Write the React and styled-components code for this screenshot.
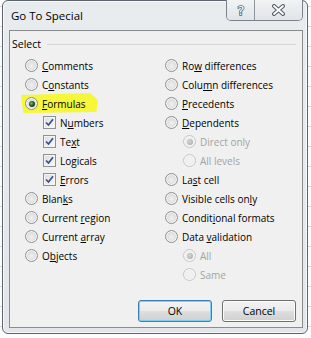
import React from 'react'
import styled, { createGlobalStyle, css } from 'styled-components'

const GlobalStyle = createGlobalStyle`
  html, body { margin:0; padding:0; }
  body {
    width:311px;
    height:338px;
    overflow:hidden;
    background-color:#fdfdfd;
    background-image:linear-gradient(#d9d9d9 1px, transparent 1px);
    background-size:100% 20px;
    background-position:0 6px;
    font-family:"Open Sans", "Noto Sans", sans-serif;
  }
`

const left = [
  { label: 'Comments', key: 'C', kind: 'radio' },
  { label: 'Constants', key: 'o', at: 1, kind: 'radio' },
  { label: 'Formulas', key: 'F', kind: 'radio', checked: true, mark: true },
  { label: 'Numbers', key: 'u', at: 1, kind: 'check', indent: true },
  { label: 'Text', key: 'x', at: 2, kind: 'check', indent: true },
  { label: 'Logicals', key: 'g', at: 2, kind: 'check', indent: true },
  { label: 'Errors', key: 'E', kind: 'check', indent: true },
  { label: 'Blanks', key: 'k', at: 4, kind: 'radio' },
  { label: 'Current region', key: 'r', at: 8, kind: 'radio' },
  { label: 'Current array', key: 'a', at: 8, kind: 'radio' },
  { label: 'Objects', key: 'b', at: 1, kind: 'radio' },
]

const right = [
  { label: 'Row differences', key: 'w', at: 2, kind: 'radio' },
  { label: 'Column differences', key: 'm', at: 4, kind: 'radio' },
  { label: 'Precedents', key: 'P', kind: 'radio' },
  { label: 'Dependents', key: 'D', kind: 'radio' },
  { label: 'Direct only', kind: 'radio', indent: true, disabled: true, checked: true },
  { label: 'All levels', kind: 'radio', indent: true, disabled: true },
  { label: 'Last cell', key: 's', at: 2, kind: 'radio' },
  { label: 'Visible cells only', key: 'y', at: 16, kind: 'radio' },
  { label: 'Conditional formats', key: 't', at: 6, kind: 'radio' },
  { label: 'Data validation', key: 'v', at: 5, kind: 'radio' },
  { label: 'All', kind: 'radio', indent: true, disabled: true, checked: true },
  { label: 'Same', kind: 'radio', indent: true, disabled: true },
]

function Label({ text, at = 0, hasKey }) {
  if (!hasKey) return <span>{text}</span>
  return (
    <span>
      {text.slice(0, at)}
      <u>{text[at]}</u>
      {text.slice(at + 1)}
    </span>
  )
}

function Option({ o }) {
  return (
    <Row $indent={o.indent} $mark={o.mark} $disabled={o.disabled}>
      {o.kind === 'radio' ? (
        <Radio $checked={o.checked} $disabled={o.disabled} />
      ) : (
        <Check>
          <svg width="9" height="9" viewBox="0 0 9 9">
            <path d="M1 4.5 L3.5 7 L8 1.2" fill="none" stroke="#34508f" strokeWidth="1.7" />
          </svg>
        </Check>
      )}
      <Label text={o.label} at={o.at} hasKey={!!o.key} />
    </Row>
  )
}

function App() {
  return (
    <>
      <GlobalStyle />
      <Window>
        <TitleBar>
          <Title>Go To Special</Title>
          <Caption>
            <CapButton $w={27}>
              <svg width="12" height="14" viewBox="0 0 12 14">
                <text x="6" y="12" textAnchor="middle" fontSize="13" fontFamily="DejaVu Sans, sans-serif"
                  fill="#fff" stroke="#5b626b" strokeWidth="1.6" paintOrder="stroke">?</text>
              </svg>
            </CapButton>
            <CapButton $w={47}>
              <svg width="15" height="12" viewBox="0 0 15 12">
                <path d="M3 2 L12 10 M12 2 L3 10" stroke="#59606a" strokeWidth="4" strokeLinecap="round" />
                <path d="M3 2 L12 10 M12 2 L3 10" stroke="#fff" strokeWidth="1.8" strokeLinecap="round" />
              </svg>
            </CapButton>
          </Caption>
        </TitleBar>
        <Client>
          <GroupHead>
            <span>Select</span>
            <Rule />
          </GroupHead>
          <Columns>
            <Col>{left.map(o => <Option key={o.label} o={o} />)}</Col>
            <Col>{right.map(o => <Option key={o.label} o={o} />)}</Col>
          </Columns>
          <Buttons>
            <Button $default>OK</Button>
            <Button>Cancel</Button>
          </Buttons>
        </Client>
      </Window>
    </>
  )
}

export default App

const Window = styled.div`
  margin-left:2px;
  width:306px;
  height:334px;
  box-sizing:border-box;
  border:1px solid #5d646d;
  border-radius:6px;
  background:linear-gradient(#e9ecef, #e2e6ea);
  box-shadow:inset 0 0 0 1px #f8f9fa;
  display:flex;
  flex-direction:column;
`
const TitleBar = styled.div`
  height:29px;
  display:flex;
  align-items:flex-start;
  padding:0 4px 0 8px;
`
const Title = styled.div`
  height:29px;
  line-height:29px;
  font-size:11.5px;
  color:#000;
`
const Caption = styled.div`
  margin-left:auto;
  margin-top:-1px;
  display:flex;
  border:1px solid #7c828a;
  border-top:none;
  border-radius:0 0 5px 5px;
  overflow:hidden;
  box-shadow:inset 0 0 0 1px #f5f7f9;
`
const CapButton = styled.div`
  width:${p => p.$w}px;
  height:20px;
  display:flex;
  align-items:center;
  justify-content:center;
  background:linear-gradient(#f1f3f5, #e1e5e9);
  & + & { border-left:1px solid #8e949b; }
`
const Client = styled.div`
  margin-left:6px;
  width:294px;
  height:298px;
  box-sizing:border-box;
  border:1px solid #8a8c8f;
  background:#f0f0f0;
  display:flex;
  flex-direction:column;
`
const GroupHead = styled.div`
  margin-top:6px;
  height:14px;
  display:flex;
  align-items:center;
  gap:6px;
  padding:0 6px 0 2px;
  font-size:10.5px;
  color:#000;
`
const Rule = styled.div`
  flex:1;
  height:1px;
  background:#d6d6d6;
`
const Columns = styled.div`
  margin-top:5px;
  display:grid;
  grid-template-columns:140px 1fr;
  padding-left:15px;
`
const Col = styled.div`
  display:flex;
  flex-direction:column;
`
const Row = styled.div`
  position:relative;
  isolation:isolate;
  height:19px;
  display:flex;
  align-items:center;
  gap:4px;
  padding-left:${p => (p.$indent ? 18 : 0)}px;
  font-size:10px;
  color:${p => (p.$disabled ? '#a3a3a3' : '#000')};
  u { text-decoration-thickness:1px; text-underline-offset:1px; }
  ${p => p.$mark && css`
    &::before {
      content:'';
      position:absolute;
      left:-4px;
      top:-1px;
      width:77px;
      height:20px;
      z-index:-1;
      background:#f6f63a;
      clip-path:polygon(0 10%, 90% 0, 100% 35%, 98% 95%, 3% 100%);
    }
  `}
`
const Radio = styled.span`
  flex:none;
  width:13px;
  height:13px;
  box-sizing:border-box;
  border-radius:50%;
  border:1px solid ${p => (p.$disabled ? '#c6c6c6' : '#8f9194')};
  background:${p => (p.$disabled
    ? 'radial-gradient(circle, #f3f3f3 0, #e9e9e9 100%)'
    : 'radial-gradient(circle at 50% 55%, #f2f2f2 0, #dadada 60%, #c9c9c9 100%)')};
  box-shadow:inset 0 0 0 1px #f7f7f7;
  display:flex;
  align-items:center;
  justify-content:center;
  &::after {
    content:'';
    display:${p => (p.$checked ? 'block' : 'none')};
    width:6px;
    height:6px;
    border-radius:50%;
    background:${p => (p.$disabled
      ? 'radial-gradient(circle at 40% 40%, #d5d5d5 0, #a7a7a7 100%)'
      : 'radial-gradient(circle at 40% 40%, #7fbf55 0, #2d5c17 45%, #0b1c05 100%)')};
  }
`
const Check = styled.span`
  flex:none;
  width:13px;
  height:13px;
  box-sizing:border-box;
  border:1px solid #8f9194;
  background:linear-gradient(135deg, #dcdcdc, #fbfbfb);
  box-shadow:inset 0 0 0 1px #f4f4f4;
  display:flex;
  align-items:center;
  justify-content:center;
`
const Buttons = styled.div`
  margin-top:auto;
  margin-bottom:5px;
  display:flex;
  justify-content:flex-end;
  gap:10px;
  padding-right:6px;
`
const Button = styled.div`
  width:74px;
  height:22px;
  box-sizing:border-box;
  border:1px solid ${p => (p.$default ? '#3a7fb0' : '#707070')};
  border-radius:3px;
  background:linear-gradient(#f3f3f3 0, #ebebeb 48%, #dedede 52%, #d0d0d0 100%);
  box-shadow:inset 0 0 0 1px ${p => (p.$default ? '#7fd0ef' : '#fbfbfb')};
  display:flex;
  align-items:center;
  justify-content:center;
  font-size:10.5px;
  color:#000;
`
